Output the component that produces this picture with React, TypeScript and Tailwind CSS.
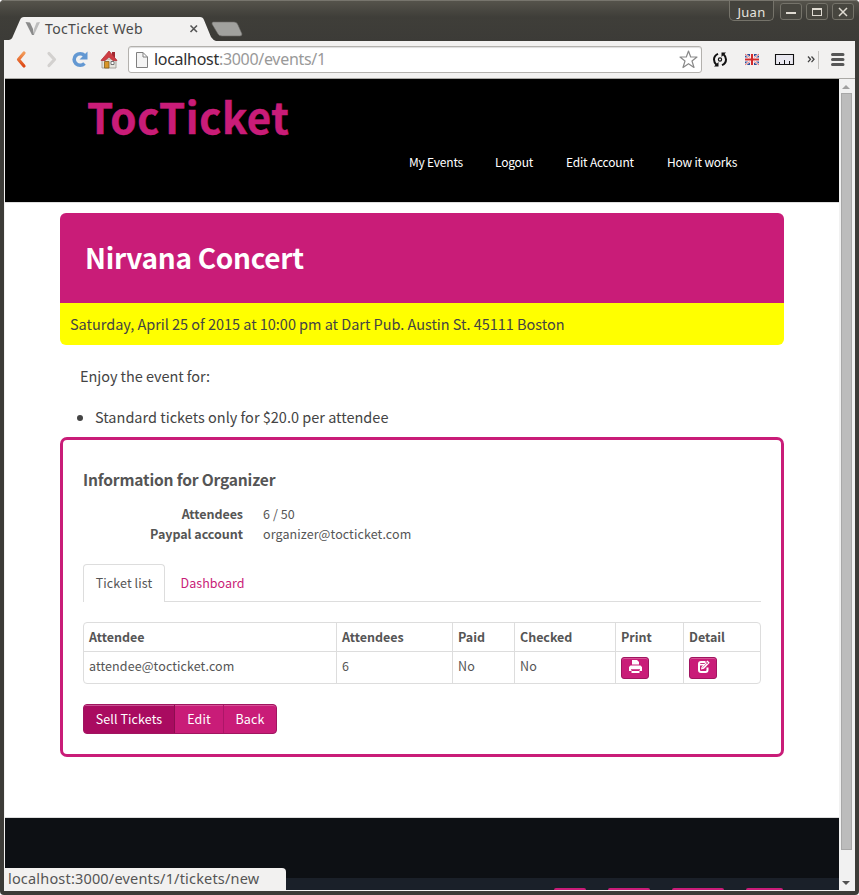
import type { ReactNode } from "react";

const PAGE_FONT = "font-['Noto_Sans_CJK_JP','Source_Sans_Pro',sans-serif]";
const CHROME_FONT = "font-['Noto_Sans','Open_Sans',sans-serif]";

function WindowButton({ children }: { children: ReactNode }) {
  return (
    <div className="flex h-[17px] w-[22px] items-center justify-center rounded-[3px] border border-[#75736a] bg-[#47463f]">
      {children}
    </div>
  );
}

function TitleBar() {
  return (
    <div className="relative flex h-[41px] shrink-0 justify-between rounded-t-[4px] border-t border-[#77756d] bg-linear-to-b from-[#55534b] via-[#3f3e39] via-40% to-[#3c3b37]">
      <div className="relative flex h-[25px] w-[250px] self-end">
        <svg className="absolute inset-0" width="250" height="25" viewBox="0 0 250 25">
          <path d="M4 25 V24 L9 24 Q12 23.500 13 20 L20 4 Q21 1 24 1 L200 1 Q203 1 204 4 L211 21 Q213 24 216 25 Z" fill="#f2f1f0" />
          <path d="M213 6 H234 Q237 6 238 9 L242 18 Q242 20 240 20 H222 Q219 20 218 18 L212 8 Q212 6 213 6Z" fill="#a1a19e" stroke="#6b6a66" strokeWidth="0.6" />
          <path d="M25.500 6 L30 6.500 L33 13 L34 19 L32 19 Z" fill="#8a8a8a" />
          <path d="M40 6 L36.500 6.500 L34 13 L34 19 Z" fill="#bdbdbd" />
          <path d="M190.500 9.500 l6.500 6.500 m0 -6.500 l-6.500 6.500" stroke="#555" strokeWidth="1.600" />
        </svg>
        <span className="relative ml-[45px] text-[14px] leading-[25px] tracking-[0.35px] whitespace-nowrap text-[#4a4a4a]">
          TocTicket Web
        </span>
      </div>
      <div className="flex items-start gap-1 pr-[5px]">
        <div className="mr-[2px] h-[20px] w-[45px] rounded-b-[5px] border border-t-0 border-[#75736a] bg-[#44433d] text-center text-[13px] leading-[23px] tracking-[0.3px] text-[#e6e4df]">
          Juan
        </div>
        <div className="flex gap-1 pt-[2px]">
          <WindowButton>
            <div className="mt-[3px] h-[2px] w-[10px] bg-[#dfdbd2]" />
          </WindowButton>
          <WindowButton>
            <div className="h-[8px] w-[10px] border border-t-2 border-[#dfdbd2]" />
          </WindowButton>
          <WindowButton>
            <svg width="10" height="10" viewBox="0 0 10 10">
              <path d="M1 1 L9 9 M9 1 L1 9" stroke="#dfdbd2" strokeWidth="1.500" />
            </svg>
          </WindowButton>
        </div>
      </div>
    </div>
  );
}

function NavigationIcons() {
  return (
    <svg width="123" height="37" viewBox="1 0 123 37" className="shrink-0">
      <defs>
        <linearGradient id="back" x1="0" y1="0" x2="0" y2="1">
          <stop offset="0" stopColor="#f29a58" />
          <stop offset="1" stopColor="#dd4814" />
        </linearGradient>
      </defs>
      <path d="M20 12 L14.500 18.500 L20 25" fill="none" stroke="url(#back)" strokeWidth="3.200" strokeLinejoin="round" strokeLinecap="round" />
      <path d="M45 12.500 L50.500 18.500 L45 24.500" fill="none" stroke="#d3d1cf" strokeWidth="3.200" strokeLinejoin="round" strokeLinecap="round" />
      <path d="M80.500 14.500 A6 5.800 0 1 0 80.500 22.500" fill="none" stroke="#6398d2" strokeWidth="3.600" />
      <path d="M83.500 10.500 V18.500 H75.500 Z" fill="#6398d2" />
      <g>
        <path d="M98 18 H112 V27 H98 Z" fill="#e6e4de" stroke="#98938a" strokeWidth="0.800" />
        <path d="M108 11 h3 v6 h-3z" fill="#a02830" />
        <path d="M97 19.500 L105 10 L113 19.500 H109 L105 16 L101 19.500Z" fill="#cf3d43" stroke="#b5343b" strokeWidth="0.800" strokeLinejoin="round" />
        <path d="M100.500 20.500 h4.500 v6.500 h-4.500z" fill="#d99528" stroke="#83611d" strokeWidth="0.800" />
        <path d="M107 20.500 h3 v3 h-3z" fill="#fff" stroke="#666" strokeWidth="0.900" />
      </g>
    </svg>
  );
}

function ToolbarExtensions() {
  return (
    <svg width="152" height="37" viewBox="0 0 152 37" className="shrink-0">
      <g fill="none" stroke="#111" strokeWidth="2">
        <path d="M16 12.800 Q12 14.500 12 18.500 Q12 21.500 14.500 23.800 M20 24.200 Q24 22.500 24 18.500 Q24 15.500 21.500 13.200" />
        <circle cx="18" cy="18.500" r="1.600" strokeWidth="1.200" />
      </g>
      <path d="M12 25.500 H16.500 V21Z M24 11.500 H19.500 V16Z" fill="#111" />
      <g>
        <path d="M43 13 h14 v11 h-14z" fill="#2f4f98" />
        <path d="M43 13 L57 24 M57 13 L43 24" stroke="#fff" strokeWidth="2" />
        <path d="M43 13 L57 24 M57 13 L43 24" stroke="#d44" strokeWidth="0.800" />
        <path d="M50 13 V24 M43 18.500 H57" stroke="#fff" strokeWidth="4" />
        <path d="M50 13 V24 M43 18.500 H57" stroke="#d12b2b" strokeWidth="2.200" />
      </g>
      <path d="M73.500 13.500 h18 v10 h-18z" fill="#e9e8f0" stroke="#111" strokeWidth="1.100" />
      <path d="M77.500 23 v-2 M82.500 23 v-4 M87.500 23 v-3" stroke="#111" strokeWidth="1" />
      <path d="M106 15.500 l2.500 2.800 l-2.500 2.800 M109.500 15.500 l2.500 2.800 l-2.500 2.800" fill="none" stroke="#444" strokeWidth="1.300" />
      <path d="M116.500 10 v18" stroke="#c3c1be" strokeWidth="1" />
      <path d="M130.500 13.500 h10.500 M130.500 18.500 h10.500 M130.500 23.500 h10.500" stroke="#575757" strokeWidth="3" strokeLinecap="round" />
    </svg>
  );
}

function Toolbar() {
  return (
    <div className="flex h-[38px] shrink-0 items-center border-b border-[#aaa9a5] bg-[#f2f1f0]">
      <NavigationIcons />
      <div className="flex h-[27px] w-[574px] shrink-0 items-center rounded-[3px] border border-[#b3b1ad] bg-white shadow-[inset_0_1px_1px_#ddd]">
        <svg width="25" height="25" viewBox="0 0 25 25">
          <path d="M7.500 5.500 H14 L18.500 10 V20.500 H7.500Z M14 5.500 V10 H18.500" fill="#f4f4f4" stroke="#808080" />
        </svg>
        <span className="flex-1 text-[16px] leading-[25px] tracking-[-0.3px] whitespace-nowrap text-[#999]">
          <span className="text-[#303030]">localhost</span>:3000/events/1
        </span>
        <svg width="24" height="25" viewBox="0 0 24 25">
          <path d="M11.500 4 L13.700 10 H20 L15 14 L17 20.500 L11.500 16.700 L6 20.500 L8 14 L3 10 H9.300Z" fill="#fff" stroke="#898989" strokeWidth="1.200" strokeLinejoin="round" />
        </svg>
      </div>
      <ToolbarExtensions />
    </div>
  );
}

function SiteHeader() {
  return (
    <header className="h-[124px] shrink-0 border-b border-[#dedede] bg-black pl-[82px]">
      <div className="h-[78px] text-[42px] leading-[74px] font-bold tracking-[0.6px] whitespace-nowrap text-[#c91c78] [-webkit-text-stroke:0.5px_#c91c78]">
        TocTicket
      </div>
      <nav className="flex h-[10px] items-center pl-[322px] text-[12px] leading-[20px] tracking-[-0.2px] whitespace-nowrap text-white">
        <a className="w-[86px]">My Events</a>
        <a className="w-[71px]">Logout</a>
        <a className="w-[101px]">Edit Account</a>
        <a>How it works</a>
      </nav>
    </header>
  );
}

function PrintIcon() {
  return (
    <svg width="13" height="14" viewBox="0 0 13 14">
      <path d="M3 0 H8 L10 2 V4.500 H3Z M1.500 5.500 H11.500 L13 7 V11 H11 V9 H2 V11 H0 V7Z" fill="#fff" />
      <path d="M2.500 9.500 H10.500 V13 H2.500Z" fill="#fff" />
      <path d="M3 9.500 h7 v1.500 h-7z" fill="#c91c78" />
      <path d="M3 5 h7" stroke="#e394bd" strokeWidth="0.900" />
    </svg>
  );
}

function EditIcon() {
  return (
    <svg width="13" height="14" viewBox="0 0 13 14">
      <path d="M8.500 2 H4 Q2 2 2 4 V10 Q2 12 4 12 H8.500 Q10.500 12 10.500 10 V7.500" fill="none" stroke="#fff" strokeWidth="2" />
      <path d="M2 4.700 H7.500" stroke="#fff" strokeWidth="1.600" />
      <path d="M4 9.500 L4.500 7 L10.500 0.500 L12.700 2.700 L7 8.800Z" fill="#fff" />
      <path d="M5.500 7.800 L11 2 M9 2 L11 4" stroke="#c91c78" strokeWidth="0.600" />
    </svg>
  );
}

function IconButton({ children }: { children: ReactNode }) {
  return (
    <button className="mt-px flex h-[22px] w-[28px] items-start justify-center rounded-[3px] border border-[#a01560] bg-[#c91c78] pt-[2px] shadow-[inset_0_1px_0_#d75497]">
      {children}
    </button>
  );
}

const COLUMNS = "grid grid-cols-[252px_116px_62px_101px_68px_77px]";

function TicketTable() {
  return (
    <div className="mt-[20px] h-[62px] rounded-[4px] border border-[#dddddd] whitespace-nowrap">
      <div className={`${COLUMNS} h-[28px] font-bold`}>
        {["Attendee", "Attendees", "Paid", "Checked", "Print", "Detail"].map((title) => (
          <div key={title} className="border-l border-[#ddd] pt-[4px] pl-[5px] tracking-[-0.03px] first:border-l-0">
            {title}
          </div>
        ))}
      </div>
      <div className={`${COLUMNS} h-[32px] border-t border-[#ddd] *:border-l *:border-[#ddd] *:pt-[4px] *:pl-[5px] *:first:border-l-0`}>
        <div>attendee@tocticket.com</div>
        <div>6</div>
        <div>No</div>
        <div>No</div>
        <div className="flex">
          <IconButton>
            <PrintIcon />
          </IconButton>
        </div>
        <div className="flex">
          <IconButton>
            <EditIcon />
          </IconButton>
        </div>
      </div>
    </div>
  );
}

function OrganizerPanel() {
  return (
    <section className="mt-[10px] h-[320px] w-[724px] rounded-[7px] border-[3px] border-[#c91c78] px-[20px] text-[12.5px] leading-[20px] tracking-[0.09px] whitespace-nowrap text-[#555]">
      <h2 className="pt-[28px] text-[15.6px] leading-[22px] font-bold tracking-[-0.18px]">Information for Organizer</h2>
      <dl className="mt-[14px] grid grid-cols-[160px_1fr] gap-x-[20px]">
        <dt className="text-right font-bold tracking-[-0.05px]">Attendees</dt>
        <dd>6 / 50</dd>
        <dt className="text-right font-bold tracking-[-0.03px]">Paypal account</dt>
        <dd>organizer@tocticket.com</dd>
      </dl>
      <div className="mt-[20px] flex h-[38px] w-[678px] border-b border-[#ddd]">
        <div className="h-[38px] w-[82px] rounded-t-[4px] border border-b-0 border-[#ddd] bg-white text-center leading-[36px]">
          Ticket list
        </div>
        <div className="pl-[15.5px] leading-[38px] tracking-[0.05px] text-[#c91c78]">Dashboard</div>
      </div>
      <TicketTable />
      <div className="mt-[20px] flex h-[30px] w-[194px] overflow-hidden rounded-[4px] border border-[#a01560] bg-[#c91c78] text-center leading-[28px] text-white shadow-[inset_0_1px_0_#d75497]">
        <div className="w-[90px] bg-[#a90b60] shadow-[inset_0_1px_0_#c75391]">Sell Tickets</div>
        <div className="w-[49px] border-l border-[#8d0d50]">Edit</div>
        <div className="flex-1 border-l border-[#ad1668]">Back</div>
      </div>
    </section>
  );
}

function EventPage() {
  return (
    <main className="flex-1 overflow-hidden bg-white pl-[55px] text-[#444]">
      <div className="mt-[10px] w-[724px] overflow-hidden rounded-[6px] whitespace-nowrap">
        <h1 className="h-[90px] bg-[#c91c78] pl-[25px] text-[28px] leading-[88px] font-bold tracking-[-0.28px] text-white">Nirvana Concert</h1>
        <p className="h-[42px] bg-[#ffff00] pl-[10px] text-[14.5px] leading-[42px] tracking-[-0.03px]">
          Saturday, April 25 of 2015 at 10:00 pm at Dart Pub. Austin St. 45111 Boston
        </p>
      </div>
      <p className="mt-[20px] pl-[20px] text-[14.5px] leading-[21px] tracking-[-0.05px]">Enjoy the event for:</p>
      <ul className="mt-[20px] list-disc pl-[35px] text-[14.5px] leading-[21px]">
        <li>Standard tickets only for $20.0 per attendee</li>
      </ul>
      <OrganizerPanel />
    </main>
  );
}

function SiteFooter() {
  return (
    <footer className="relative flex h-[73px] shrink-0 flex-col border-t border-[#ddd] bg-[#0d1014]">
      <div className="mt-[60px] flex h-[12px] items-end bg-[#1a2029] pl-[549px]">
        <div className="h-[2px] w-[32px] rounded-t bg-[#c91c78]" />
        <div className="ml-[22px] h-[2px] w-[42px] rounded-t bg-[#c91c78]" />
        <div className="ml-[22px] h-[2px] w-[52px] rounded-t bg-[#c91c78]" />
        <div className="ml-[22px] h-[2px] w-[37px] rounded-t bg-[#c91c78]" />
      </div>
      <div className={`absolute bottom-0 left-0 h-[22px] w-[281px] rounded-tr-[4px] bg-[#f2f1f0] pl-[3px] text-[14.5px] leading-[21px] tracking-[0.18px] whitespace-nowrap text-[#555] ${CHROME_FONT}`}>
        localhost:3000/events/1/tickets/new
      </div>
    </footer>
  );
}

function Scrollbar() {
  return (
    <div className="flex w-[16px] shrink-0 flex-col items-center bg-[#f1f1f1] pr-[2px]">
      <div className="mt-[6px] h-0 w-0 border-x-4 border-b-4 border-x-transparent border-b-[#a0a0a0]" />
      <div className="mt-[4px] h-[757px] w-[11px] border border-[#a8a8a8] bg-[#bcbcbc]" />
      <div className="mt-[31px] h-0 w-0 border-x-4 border-t-4 border-x-transparent border-t-[#505050]" />
    </div>
  );
}

export default function App() {
  return (
    <div className={`flex h-[895px] w-[859px] flex-col overflow-hidden rounded-[4px] bg-[#3c3b37] ${CHROME_FONT}`}>
      <TitleBar />
      <div className="mx-1 flex h-[850px] shrink-0 flex-col border-l border-[#f2f1f0]">
        <Toolbar />
        <div className="flex min-h-0 flex-1 border-b border-[#f2f1f0]">
          <div className={`flex w-[834px] flex-col ${PAGE_FONT}`}>
            <SiteHeader />
            <EventPage />
            <SiteFooter />
          </div>
          <Scrollbar />
        </div>
      </div>
    </div>
  );
}
